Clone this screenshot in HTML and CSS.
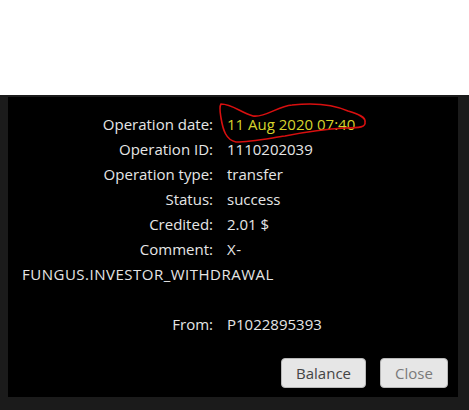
FILE: index.html
```html
<!DOCTYPE html>
<html>
<head>
<meta charset="utf-8">
<link rel="stylesheet" href="styles.css">
</head>
<body>
<div class="top"></div>
<div class="backdrop">
  <div class="modal">
    <div class="details">
      <div class="row"><span class="label">Operation date:</span><span class="date">11 Aug 2020 07:40</span></div>
      <div class="row"><span class="label">Operation ID:</span>1110202039</div>
      <div class="row"><span class="label">Operation type:</span>transfer</div>
      <div class="row"><span class="label">Status:</span>success</div>
      <div class="row"><span class="label">Credited:</span>2.01 $</div>
      <div class="row"><span class="label">Comment:</span><span class="caps">X-<wbr>FUNGUS.INVESTOR_WITHDRAWAL</span></div>
      <div class="row spaced"><span class="label">From:</span>P1022895393</div>
    </div>
    <div class="footer">
      <button class="btn">Balance</button>
      <button class="btn btn-muted">Close</button>
    </div>
  </div>
</div>
<svg class="scribble" width="469" height="410" viewBox="0 0 469 410">
  <path d="M221 104 C 232 104, 240 112, 253 116 C 265 118, 278 106, 292 105 C 310 103, 330 103, 348 111 C 358 114, 366 117, 365 122 C 366 127, 360 128, 345 128 C 325 129, 305 132, 285 136 C 265 139, 250 142, 236 142 C 226 140, 223 130, 221 118 C 220 112, 219 107, 221 104 Z" fill="none" stroke="#d80f0f" stroke-width="1.6"/>
</svg>
</body>
</html>
```
FILE: styles.css
```css
html, body {
  margin: 0;
  padding: 0;
  background: #ffffff;
}
body {
  width: 469px;
  height: 410px;
  overflow: hidden;
  position: relative;
  font-family: "Open Sans", "DejaVu Sans", sans-serif;
}
.top {
  height: 95px;
  background: #ffffff;
}
.backdrop {
  background: #1b1b1b;
  padding: 2px 11px 13px 8px;
}
.modal {
  background: #000000;
  height: 300px;
  display: flex;
  flex-direction: column;
  box-sizing: border-box;
  padding: 15px 10px 9px 14px;
}
.details {
  color: #e6e6e6;
  font-size: 15px;
  line-height: 25px;
}
.label {
  display: inline-block;
  width: 191px;
  text-align: right;
  margin-right: 14px;
}
.date {
  color: #d6d42c;
}
.caps {
  letter-spacing: 0.5px;
}
.spaced {
  margin-top: 25px;
}
.footer {
  margin-top: auto;
  display: flex;
  justify-content: flex-end;
  gap: 14px;
}
.btn {
  font-family: "Open Sans", "DejaVu Sans", sans-serif;
  font-size: 15px;
  height: 30px;
  padding: 0 14px;
  background: #e6e6e6;
  border: 1px solid #b8b8b8;
  border-radius: 4px;
  color: #444444;
}
.btn-muted {
  color: #7a7a7a;
  width: 68px;
}
.scribble {
  position: absolute;
  left: 0;
  top: 0;
  pointer-events: none;
}
```
